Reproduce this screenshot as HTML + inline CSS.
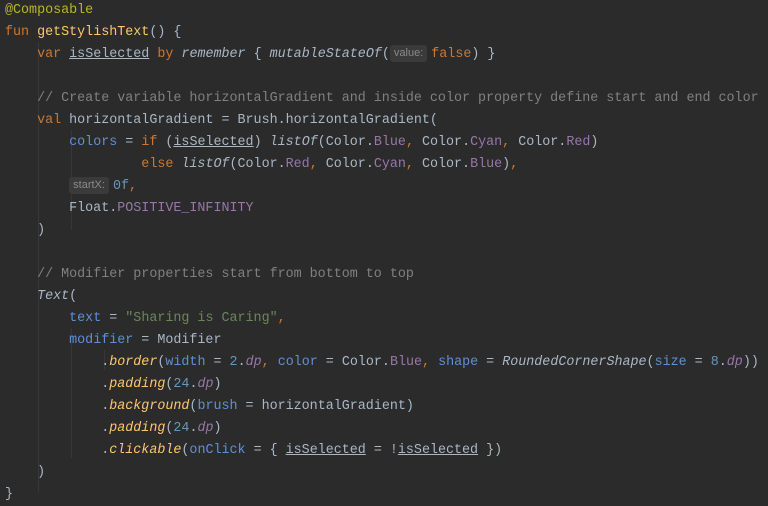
<!DOCTYPE html>
<html><head><meta charset="utf-8"><style>
html,body{margin:0;padding:0;background:#2b2b2b;width:768px;height:504px;overflow:hidden}
pre{margin:0;position:absolute;left:5px;top:0px;font-family:"Liberation Mono",monospace;font-size:13.37px;line-height:22px;color:#a9b7c6}
.k{color:#cc7832}.f{color:#ffc66d}.a{color:#bbb529}.c{color:#808080}.n{color:#5f8fd8}.s{color:#6a8759}.d{color:#6897bb}.p{color:#9876aa}.i{font-style:italic}.u{text-decoration:underline}
.m{color:#ffc66d;font-style:italic}
.h{display:inline-block;background:#3a3a3a;color:#8a8a8a;font-family:"Liberation Sans",sans-serif;font-size:11px;line-height:17px;border-radius:3px;padding:0 4px;margin-right:4px;vertical-align:1px}
.g{position:absolute;width:1px;background:#373737}
</style></head><body>
<div class="g" style="left:38px;top:42px;height:450px"></div>
<div class="g" style="left:71px;top:130px;height:100px"></div>
<div class="g" style="left:71px;top:328px;height:130px"></div>
<div class="g" style="left:104px;top:350px;height:20px"></div>
<pre><span class="a">@Composable</span>
<span class="k">fun </span><span class="f">getStylishText</span>() {
    <span class="k">var </span><span class="u">isSelected</span> <span class="k">by </span><span class="i">remember</span> { <span class="i">mutableStateOf</span>(<span class="h">value:</span><span class="k">false</span>) }

    <span class="c">// Create variable horizontalGradient and inside color property define start and end color</span>
    <span class="k">val </span>horizontalGradient = Brush.horizontalGradient(
        <span class="n">colors</span> = <span class="k">if </span>(<span class="u">isSelected</span>) <span class="i">listOf</span>(Color.<span class="p">Blue</span><span class="k">, </span>Color.<span class="p">Cyan</span><span class="k">, </span>Color.<span class="p">Red</span>)
                 <span class="k">else </span><span class="i">listOf</span>(Color.<span class="p">Red</span><span class="k">, </span>Color.<span class="p">Cyan</span><span class="k">, </span>Color.<span class="p">Blue</span>)<span class="k">,</span>
        <span class="h">startX:</span><span class="d">0f</span><span class="k">,</span>
        Float.<span class="p">POSITIVE_INFINITY</span>
    )

    <span class="c">// Modifier properties start from bottom to top</span>
    <span class="i">Text</span>(
        <span class="n">text</span> = <span class="s">"Sharing is Caring"</span><span class="k">,</span>
        <span class="n">modifier</span> = Modifier
            .<span class="m">border</span>(<span class="n">width</span> = <span class="d">2</span>.<span class="p i">dp</span><span class="k">, </span><span class="n">color</span> = Color.<span class="p">Blue</span><span class="k">, </span><span class="n">shape</span> = <span class="i">RoundedCornerShape</span>(<span class="n">size</span> = <span class="d">8</span>.<span class="p i">dp</span>))
            .<span class="m">padding</span>(<span class="d">24</span>.<span class="p i">dp</span>)
            .<span class="m">background</span>(<span class="n">brush</span> = horizontalGradient)
            .<span class="m">padding</span>(<span class="d">24</span>.<span class="p i">dp</span>)
            .<span class="m">clickable</span>(<span class="n">onClick</span> = { <span class="u">isSelected</span> = !<span class="u">isSelected</span> })
    )
}</pre>
</body></html>
